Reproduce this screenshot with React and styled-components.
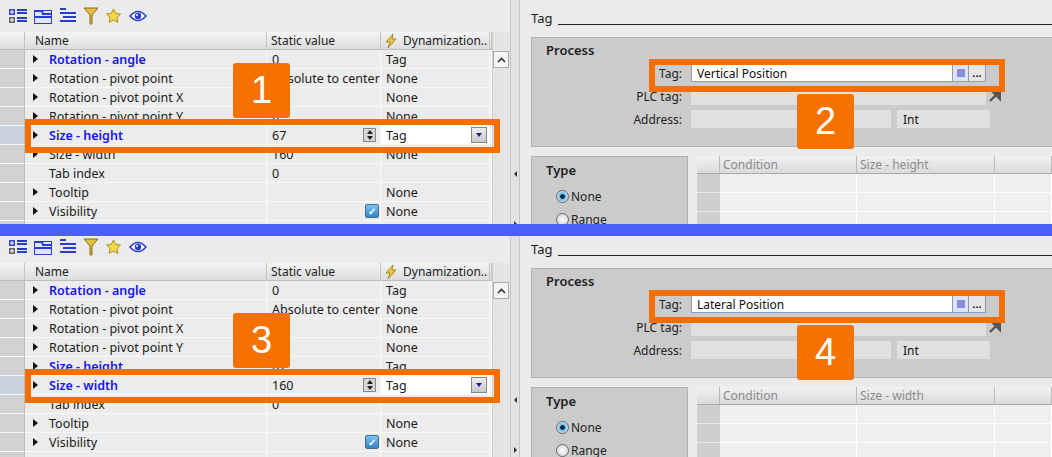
import React from "react";
import styled, { createGlobalStyle } from "styled-components";

const Global = createGlobalStyle`
  html, body { margin: 0; padding: 0; background: #ebebeb; }
  body { font-family: "Noto Sans", "Open Sans", sans-serif; font-size: 12px; color: #1a1a1a; }
  * { flex-shrink: 0; }
`;

const Page = styled.div`
  position: relative; width: 1052px; height: 457px; overflow: hidden; background: #ebebeb;
`;
const Half = styled.div`
  position: relative; display: flex; height: ${p => p.h}px; overflow: hidden;
`;
const BlueBar = styled.div`
  position: absolute; left: 0; top: 224px; width: 100%; height: 12px; background: #4a5ff7; z-index: 5;
`;
const LeftPane = styled.div`
  width: 510px; display: flex; flex-direction: column; background: #ebebeb;
`;
const Toolbar = styled.div`
  height: 32px; display: flex; align-items: center; gap: 7px; padding-left: 9px; box-sizing: border-box;
`;
const TableWrap = styled.div`display: flex; flex: 1;`;
const Table = styled.div`width: 492px; display: flex; flex-direction: column;`;
const Grid = styled.div`
  display: grid; grid-template-columns: 25px 242px 114px 109px 2px; height: ${p => p.h || 19}px;
`;
const HeadCell = styled.div`
  background: linear-gradient(#f4f4f4, #dcdcdc); border-right: 1px solid #c4c4c4; border-bottom: 1px solid #bdbdbd;
  display: flex; align-items: center; padding-left: ${p => p.pl ?? 4}px; gap: 6px; color: #222; white-space: nowrap; overflow: hidden;
`;
const RowHead = styled.div`
  background: ${p => p.sel ? "#c9d3de" : "#d2d2d2"}; border-bottom: 1px solid #f4f4f4; border-right: 1px solid #bcbcbc;
`;
const Cell = styled.div`
  background: ${p => p.white ? "#fff" : "#ececec"}; border-bottom: 1px solid #f8f8f8; border-right: 1px solid #fafafa;
  display: flex; align-items: center; padding-left: ${p => p.pl ?? 5}px; gap: 4px; white-space: nowrap; overflow: hidden;
  color: ${p => p.blue ? "#1515ee" : "#1a1a1a"}; font-weight: ${p => p.blue ? 600 : 400}; position: relative;
  box-sizing: border-box; font-size: 12.5px;
`;
const Tri = styled.span`
  width: 0; height: 0; border-top: 4px solid transparent; border-bottom: 4px solid transparent; border-left: 5px solid #111;
  margin-right: 7px; visibility: ${p => p.hide ? "hidden" : "visible"};
`;
const Spin = styled.span`
  position: absolute; right: 4px; top: 2px; width: 13px; height: 14px; background: #d6d6d6; border: 1px solid #888;
  box-sizing: border-box; display: flex; flex-direction: column; align-items: center; justify-content: space-around;
`;
const Arr = styled.span`
  width: 0; height: 0; border-left: 3px solid transparent; border-right: 3px solid transparent;
  ${p => p.up ? "border-bottom: 4px solid #222;" : "border-top: 4px solid #222;"}
`;
const Drop = styled.span`
  position: absolute; right: 2px; top: 1px; width: 16px; height: 16px; background: linear-gradient(#eee, #c8c8c8);
  border: 1px solid #888; box-sizing: border-box; display: flex; align-items: center; justify-content: center;
  & > span { border-top-color: #1a1a9a; }
`;
const Check = styled.span`
  position: absolute; right: 1px; top: 2px; width: 14px; height: 14px; border-radius: 2px; background: linear-gradient(#7cc4ef, #2f86c8);
  border: 1px solid #4a6b89; box-sizing: border-box; color: #fff; font-size: 10px; line-height: 12px; text-align: center; font-weight: bold;
`;
const Scroll = styled.div`
  width: 18px; background: #e4e4e4; border-left: 1px solid #cfcfcf; display: flex; flex-direction: column;
  padding-top: 19px;
`;
const ScrollBtn = styled.div`
  width: 16px; height: 17px; background: #f4f4f4; border: 1px solid #aaa; box-sizing: border-box; display: flex; align-items: center; justify-content: center;
`;
const Divider = styled.div`
  width: 10px; background: #e2e2e2; border-left: 1px solid #c8c8c8; border-right: 1px solid #c8c8c8; box-sizing: border-box;
  display: flex; flex-direction: column; justify-content: flex-end; align-items: center; gap: 44px; padding-bottom: 4px;
`;
const SmallTri = styled.span`
  width: 0; height: 0; border-top: 3px solid transparent; border-bottom: 3px solid transparent;
  ${p => p.left ? "border-right: 3px solid #333;" : "border-left: 3px solid #333;"}
`;

const RightPane = styled.div`flex: 1; padding: 11px 0 0 11px; display: flex; flex-direction: column;`;
const TagTitle = styled.div`display: flex; align-items: flex-end; gap: 6px; font-size: 13px; height: 16px;`;
const Rule = styled.div`flex: 1; border-bottom: 1px solid #222; margin-bottom: 2px;`;
const ProcessBox = styled.div`
  margin-top: 10px; height: 110px; background: #cbcbcb; border: 1px solid #b2b2b2; border-right: none; box-sizing: border-box;
  padding: 3px 0 0 14px; position: relative;
`;
const BoxTitle = styled.div`font-weight: 600; font-size: 13px; color: #222;`;
const FormRow = styled.div`display: flex; align-items: center; gap: 9px; margin-top: ${p => p.mt}px; height: 18px;`;
const Label = styled.div`width: 136px; text-align: right; color: #222;`;
const Input = styled.div`
  width: ${p => p.w}px; height: 18px; box-sizing: border-box; background: ${p => p.white ? "#fff" : "#e0e0e0"};
  border: 1px solid ${p => p.white ? "#8f9bb5" : "#e0e0e0"}; display: flex; align-items: center; padding-left: 5px; color: #111; position: relative;
`;
const InBtn = styled.span`
  position: absolute; top: 0; right: ${p => p.r}px; width: ${p => p.w}px; height: 16px; background: ${p => p.bg};
  border-left: 1px solid #8f9bb5; display: flex; align-items: center; justify-content: center; font-weight: bold; font-size: 11px; line-height: 8px;
`;
const Lower = styled.div`display: flex; gap: 9px; margin-top: 9px;`;
const TypeBox = styled.div`
  width: 157px; height: 80px; background: #cbcbcb; border: 1px solid #b2b2b2; box-sizing: border-box; padding: 4px 0 0 14px;
`;
const Radio = styled.div`display: flex; align-items: center; gap: 2px; margin-top: ${p => p.mt}px; margin-left: 10px; color: #222;`;
const RadioDot = styled.span`
  width: 13px; height: 13px; border-radius: 50%; border: 1px solid #666; box-sizing: border-box;
  background: ${p => p.on ? "radial-gradient(circle, #123 0 2px, #5fb4ea 2.5px, #d5ecfa 6px)" : "radial-gradient(circle, #fff, #ccc)"};
`;
const CondGrid = styled.div`flex: 1; display: flex; flex-direction: column;`;
const CondRow = styled.div`display: grid; grid-template-columns: 23px 137px 138px 1fr; height: ${p => p.h}px;`;
const CondHead = styled.div`
  background: linear-gradient(#f2f2f2, #dadada); border-right: 1px solid #bbb; border-bottom: 1px solid #aaa; color: #8a8a8a;
  display: flex; align-items: center; padding-left: 3px;
`;
const CondRH = styled.div`background: #cfcfcf; border-bottom: 1px solid #e8e8e8;`;
const CondCell = styled.div`background: #efefef; border-right: 1px solid #fff; border-bottom: 1px solid #fff;`;

const Callout = styled.div`
  position: absolute; left: ${p => p.x}px; top: ${p => p.y}px; width: ${p => p.w}px; height: ${p => p.h}px;
  border: 6px solid #f46f00; box-sizing: border-box; z-index: 3; pointer-events: none;
`;
const Badge = styled.div`
  position: absolute; left: ${p => p.x}px; top: ${p => p.y}px; width: 57px; height: 55px; background: #f57100; border-radius: 3px;
  color: #fff; font-family: "Liberation Sans", Arial, sans-serif; font-size: 38px; display: flex; align-items: center; justify-content: center; z-index: 4;
`;

const Icons = () => (
  <>
    <svg width="18" height="16" viewBox="0 0 18 16">
      <rect x="0" y="1" width="6" height="6" fill="#3a4bd0" /><path d="M1 4h4M3 2v4" stroke="#fff" />
      <rect x="0" y="9" width="6" height="6" fill="#666" /><path d="M1 12h4M3 10v4" stroke="#fff" />
      <path d="M8 2h10M8 5h10M8 10h10M8 13h10" stroke="#2a3bd0" strokeWidth="2" />
    </svg>
    <svg width="18" height="16" viewBox="0 0 18 16">
      <rect x="0.5" y="2.5" width="17" height="13" fill="#dfe6ff" stroke="#2a3bd0" />
      <path d="M0 3h8l1 3h9" stroke="#2a3bd0" fill="none" strokeWidth="2" /><path d="M1 9h16" stroke="#2a3bd0" strokeWidth="2" />
    </svg>
    <svg width="18" height="16" viewBox="0 0 18 16">
      <path d="M1 1h6M1 5h16M4 9h13M1 13h16" stroke="#2a3bd0" strokeWidth="2" />
    </svg>
    <svg width="14" height="18" viewBox="0 0 14 18">
      <path d="M0 1h14L8 8v9H6V8z" fill="#e0c040" stroke="#8a6a10" />
    </svg>
    <svg width="17" height="16" viewBox="0 0 24 24">
      <path d="M12 1.5l3.2 6.6 7.3 1-5.3 5.1 1.3 7.2L12 18l-6.5 3.4 1.3-7.2L1.5 9.1l7.3-1z" fill="#f5d94a" stroke="#b08a10" strokeWidth="1.5" />
    </svg>
    <svg width="18" height="12" viewBox="0 0 18 12">
      <path d="M1 6Q9 -3 17 6Q9 15 1 6z" fill="#fff" stroke="#2a3bd0" strokeWidth="1.5" />
      <circle cx="9" cy="6" r="3.2" fill="#2a3bd0" /><circle cx="8" cy="5" r="1" fill="#fff" />
    </svg>
  </>
);

const Bolt = () => (
  <svg width="12" height="14" viewBox="0 0 12 14"><path d="M8 0L1 8h4l-2 6 8-9H7z" fill="#f2c430" stroke="#8a6a10" strokeWidth="0.7" /></svg>
);

const rowsFor = (sel) => [
  { n: "Rotation - angle", v: "0", d: "Tag", blue: true },
  { n: "Rotation - pivot point", v: "Absolute to center", d: "None" },
  { n: "Rotation - pivot point X", v: "0", d: "None" },
  { n: "Rotation - pivot point Y", v: "0", d: "None" },
  { n: "Size - height", v: "67", d: "Tag", blue: true, active: sel === "height" },
  { n: "Size - width", v: "160", d: sel === "width" ? "Tag" : "None", blue: sel === "width", active: sel === "width" },
  { n: "Tab index", v: "0", d: "", noTri: true },
  { n: "Tooltip", v: "", d: "None" },
  { n: "Visibility", v: "", d: "None", check: true },
  { n: "", v: "", d: "", noTri: true },
];

function Section({ sel, tag, label, num1, num2, h }) {
  const rows = rowsFor(sel);
  const idx = sel === "height" ? 4 : 5;
  const boxY = 32 + 18 + idx * 19 - 7;
  return (
    <Half h={h}>
      <LeftPane>
        <Toolbar><Icons /></Toolbar>
        <TableWrap>
          <Table>
            <Grid h={18}>
              <HeadCell /><HeadCell pl={10}>Name</HeadCell><HeadCell>Static value</HeadCell>
              <HeadCell><Bolt />Dynamization..</HeadCell><HeadCell pl={0} />
            </Grid>
            {rows.map((r, i) => (
              <Grid key={i}>
                <RowHead sel={r.active} />
                <Cell blue={r.blue} pl={8}><Tri hide={r.noTri || !r.n} />{r.n}</Cell>
                <Cell>{r.v}{r.active && <Spin><Arr up /><Arr /></Spin>}{r.check && <Check>✓</Check>}</Cell>
                <Cell white={r.active}>{r.d}{r.active && <Drop><Arr /></Drop>}</Cell>
                <Cell pl={0} />
              </Grid>
            ))}
          </Table>
          <Scroll>
            <ScrollBtn>
              <svg width="9" height="6" viewBox="0 0 9 6"><path d="M1 5l3.5-3.5L8 5" stroke="#333" strokeWidth="1.6" fill="none" /></svg>
            </ScrollBtn>
          </Scroll>
        </TableWrap>
      </LeftPane>
      <Divider><SmallTri left /><SmallTri /></Divider>
      <RightPane>
        <TagTitle>Tag<Rule /></TagTitle>
        <ProcessBox>
          <BoxTitle>Process</BoxTitle>
          <FormRow mt={5}><Label>Tag:</Label>
            <Input w={295} white>{tag}
              <InBtn r={17} w={15} bg="#dfe4f2">
                <svg width="8" height="9" viewBox="0 0 8 9"><path d="M0 1h8M0 3h8M0 5h8M0 7h8" stroke="#2a3bd0" /></svg>
              </InBtn>
              <InBtn r={0} w={16} bg="#e6e6e6">...</InBtn>
            </Input>
          </FormRow>
          <FormRow mt={5}><Label>PLC tag:</Label><Input w={295} />
            <svg width="12" height="12" viewBox="0 0 12 12" style={{ marginLeft: -6 }}><path d="M1 11L8 4M4 2h7v7z" stroke="#555" strokeWidth="2.4" fill="#555" /></svg>
          </FormRow>
          <FormRow mt={5}><Label>Address:</Label><Input w={200} /><Input w={93} style={{ marginLeft: -3 }}>Int</Input></FormRow>
        </ProcessBox>
        <Lower>
          <TypeBox>
            <BoxTitle>Type</BoxTitle>
            <Radio mt={9}><RadioDot on />None</Radio>
            <Radio mt={6}><RadioDot />Range</Radio>
          </TypeBox>
          <CondGrid>
            <CondRow h={18}><CondHead /><CondHead>Condition</CondHead><CondHead>{label}</CondHead><CondHead /></CondRow>
            {[0, 1, 2, 3].map(i => (
              <CondRow h={19} key={i}><CondRH /><CondCell /><CondCell /><CondCell /></CondRow>
            ))}
          </CondGrid>
        </Lower>
      </RightPane>
      <Callout x={25} y={boxY} w={475} h={34} />
      <Badge x={233} y={boxY - 56}>{num1}</Badge>
      <Callout x={649} y={59} w={356} h={33} />
      <Badge x={797} y={94}>{num2}</Badge>
    </Half>
  );
}

export default function App() {
  return (
    <Page>
      <Global />
      <Section sel="height" tag="Vertical Position" label="Size - height" num1="1" num2="2" h={231} />
      <Section sel="width" tag="Lateral Position" label="Size - width" num1="3" num2="4" h={226} />
      <BlueBar />
    </Page>
  );
}
